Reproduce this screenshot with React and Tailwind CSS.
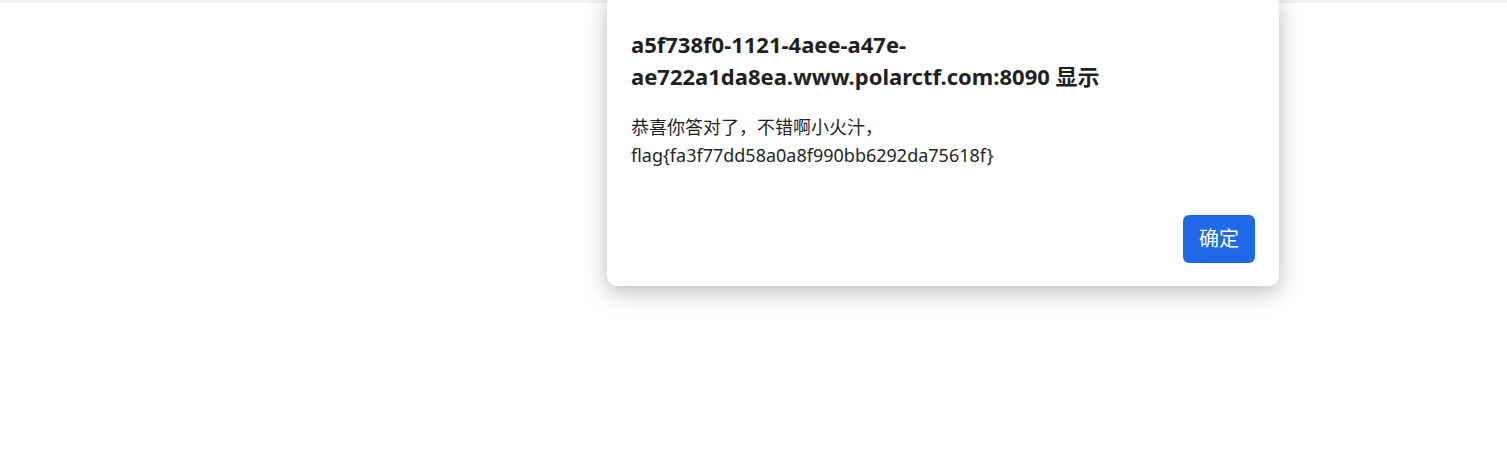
export default function App() {
  return (
    <div className="relative h-[451px] w-[1507px] overflow-hidden bg-white" style={{ fontFamily: '"Noto Sans", "Noto Sans CJK SC", sans-serif' }}>
      {/* page top edge */}
      <div className="h-[3px] w-full bg-[#f0f0f0]" />

      {/* alert dialog */}
      <div className="absolute left-[607px] top-[-6px] flex h-[292px] w-[672px] flex-col rounded-[10px] bg-white px-6 pt-[34px] pb-[23px] shadow-[0_6px_22px_rgba(0,0,0,0.28)]">
        <h2 className="text-[22px] font-bold leading-[32px] text-[#1f1f1f]">
          a5f738f0-1121-4aee-a47e-
          <br />
          ae722a1da8ea.www.polarctf.com:8090 显示
        </h2>
        <p className="mt-[21px] text-[18px] leading-[28px] text-[#1f1f1f]">
          恭喜你答对了，不错啊小火汁，
          <br />
          flag{'{'}fa3f77dd58a0a8f990bb6292da75618f{'}'}
        </p>
        <div className="mt-auto flex justify-end">
          <button className="h-12 w-[72px] rounded-md bg-[#1f6ae8] text-[20px] text-white">确定</button>
        </div>
      </div>
    </div>
  )
}
